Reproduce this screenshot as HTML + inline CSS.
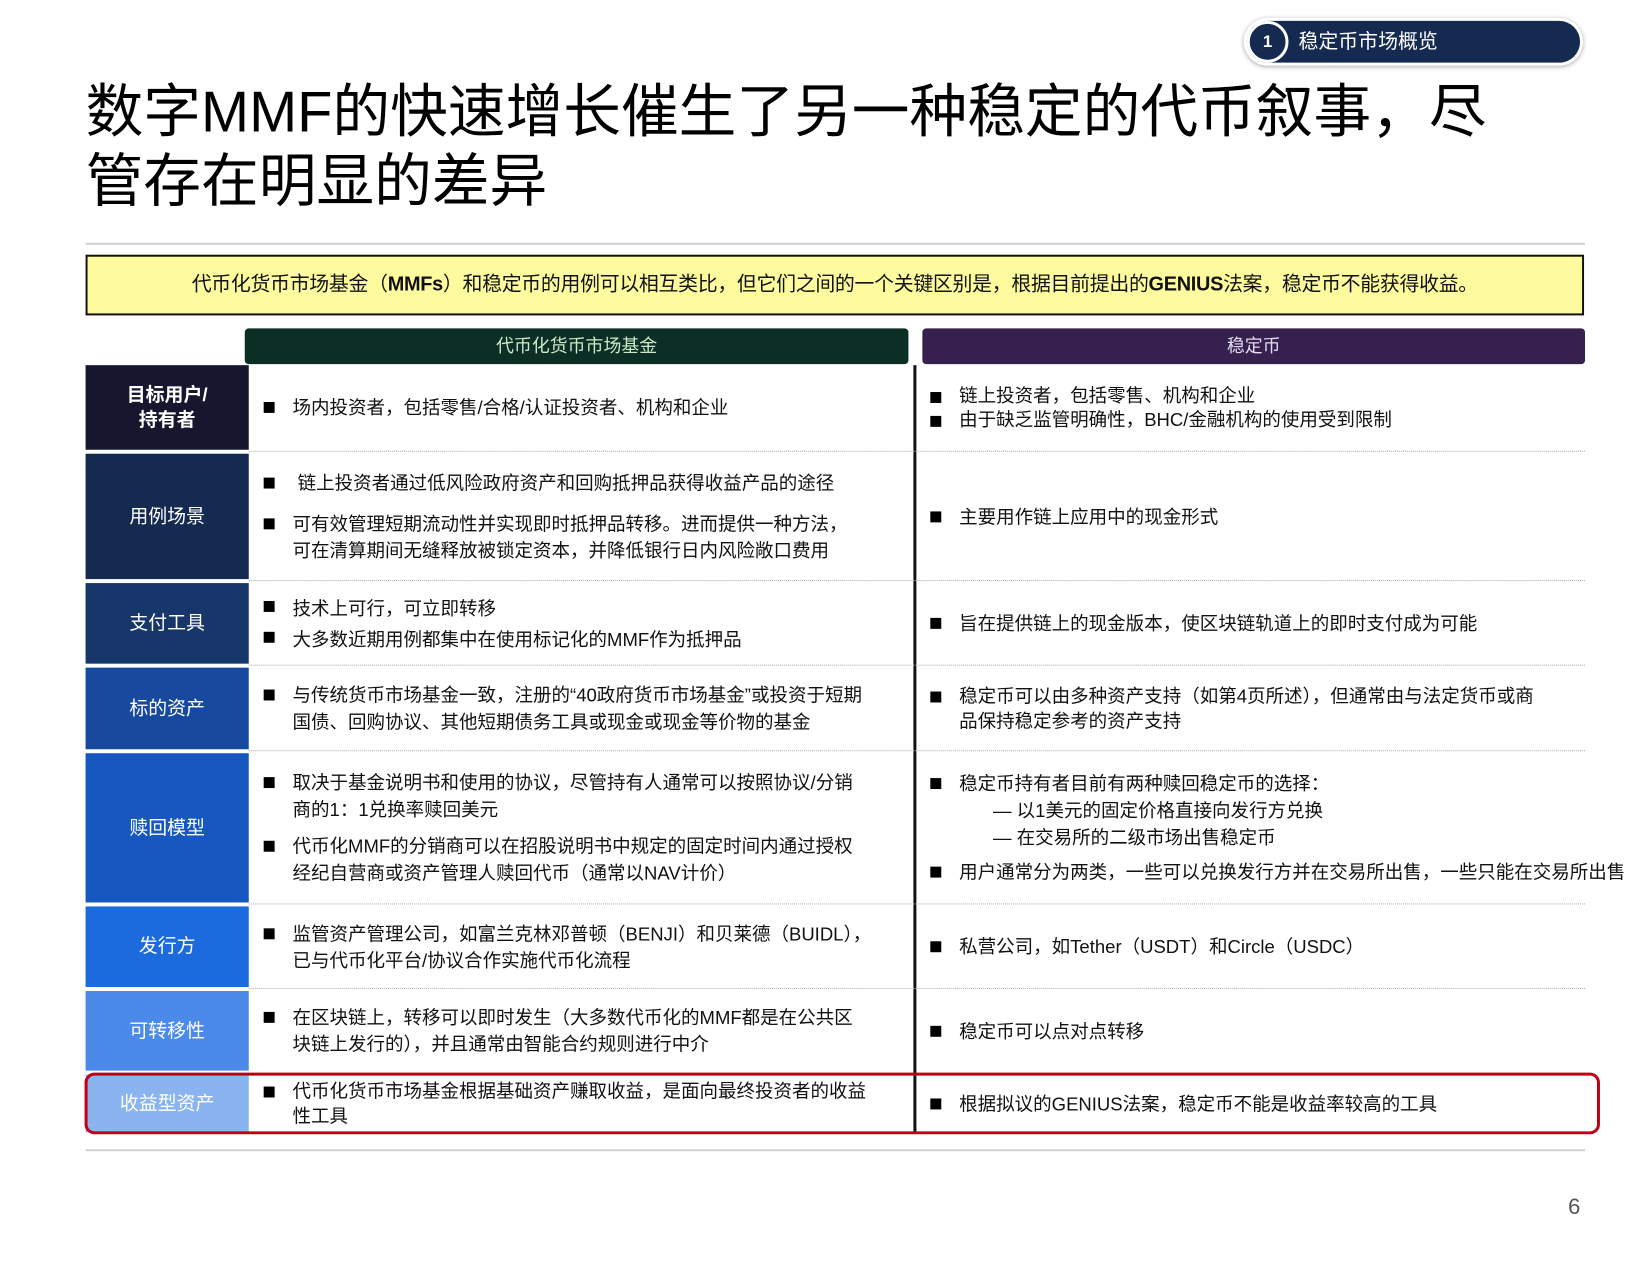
<!DOCTYPE html>
<html><head><meta charset="utf-8"><style>
*{margin:0;padding:0;box-sizing:border-box}
body{width:1650px;height:1275px;background:#fff;position:relative;overflow:hidden;font-family:"Liberation Sans","Noto Sans CJK SC",sans-serif;color:#111}
#w{position:absolute;left:0;top:0;width:1650px;height:1275px;transform:scale(0.995);transform-origin:0 0}
.abs{position:absolute}
.badge{left:1253px;top:21px;width:335px;height:42px;background:#142a50;border-radius:21px;box-shadow:0 0 0 3px #fff,0 1px 5px 3px rgba(0,0,0,.35);color:#fff;font-size:20px;line-height:42px;padding-left:52px}
.badge .num{position:absolute;left:0;top:0;width:42px;height:42px;border-radius:50%;background:#142a50;border:3px solid #fff;text-align:center;line-height:36px;font-size:17px;font-weight:bold}
h1{position:absolute;left:86px;top:78px;font-size:58px;font-weight:normal;line-height:70px;color:#000;white-space:nowrap}
.rule{left:86px;width:1507px;height:2px;background:#d0d0d0}
.yellow{left:86px;top:256px;width:1506px;height:61px;background:#fdfb9e;border:2px solid #111;text-align:center;font-size:20px;line-height:57px;letter-spacing:-0.3px}
.hd{top:330px;height:36px;border-radius:4px;text-align:center;line-height:36px;font-size:18px}
.lab{left:86px;width:164px;color:#fff;font-size:19px;display:flex;align-items:center;justify-content:center;text-align:center;line-height:25px}
.cell{display:flex;flex-direction:column;justify-content:center;font-size:18.6px;line-height:27px}
.l{left:258px;width:655px}
.r{left:928px;width:720px}
.b{position:relative;padding-left:36px;white-space:nowrap}
.b:before{content:"";position:absolute;left:7px;top:8px;width:11px;height:11px;background:#000}
.d{padding-left:70px;white-space:nowrap}
.sep{left:250px;width:1343px;border-top:1px dotted #aaa}
</style></head><body><div id="w">
<div class="abs badge"><div class="num">1</div>稳定币市场概览</div>
<h1>数字MMF的快速增长催生了另一种稳定的代币叙事，尽<br>管存在明显的差异</h1>
<div class="abs rule" style="top:244px"></div>
<div class="abs yellow">代币化货币市场基金（<b>MMFs</b>）和稳定币的用例可以相互类比，但它们之间的一个关键区别是，根据目前提出的<b>GENIUS</b>法案，稳定币不能获得收益。</div>
<div class="abs hd" style="left:246px;width:667px;background:#0b2f25;color:#cfe8c8">代币化货币市场基金</div>
<div class="abs hd" style="left:927px;width:666px;background:#35204e;color:#e4dcf0">稳定币</div>

<div class="abs" style="left:918px;top:367px;width:3px;height:771px;background:#111"></div>

<div class="abs lab" style="top:367px;height:85px;background:#16162e;font-weight:bold">目标用户/<br>持有者</div>
<div class="abs cell l" style="top:367px;height:85px"><div class="b">场内投资者，包括零售/合格/认证投资者、机构和企业</div></div>
<div class="abs cell r" style="top:367px;height:85px;line-height:24px"><div class="b">链上投资者，包括零售、机构和企业</div><div class="b">由于缺乏监管明确性，BHC/金融机构的使用受到限制</div></div>
<div class="abs sep" style="top:453px"></div>

<div class="abs lab" style="top:456px;height:126px;background:#142a50">用例场景</div>
<div class="abs cell l" style="top:456px;height:126px"><div class="b" style="margin-bottom:14px">&nbsp;链上投资者通过低风险政府资产和回购抵押品获得收益产品的途径</div><div class="b">可有效管理短期流动性并实现即时抵押品转移。进而提供一种方法，<br>可在清算期间无缝释放被锁定资本，并降低银行日内风险敞口费用</div></div>
<div class="abs cell r" style="top:456px;height:126px"><div class="b">主要用作链上应用中的现金形式</div></div>
<div class="abs sep" style="top:583px"></div>

<div class="abs lab" style="top:586px;height:81px;background:#17366a">支付工具</div>
<div class="abs cell l" style="top:586px;height:81px;line-height:31px"><div class="b">技术上可行，可立即转移</div><div class="b">大多数近期用例都集中在使用标记化的MMF作为抵押品</div></div>
<div class="abs cell r" style="top:586px;height:81px"><div class="b">旨在提供链上的现金版本，使区块链轨道上的即时支付成为可能</div></div>
<div class="abs sep" style="top:668px"></div>

<div class="abs lab" style="top:671px;height:82px;background:#174a9e">标的资产</div>
<div class="abs cell l" style="top:671px;height:82px"><div class="b">与传统货币市场基金一致，注册的“40政府货币市场基金”或投资于短期<br>国债、回购协议、其他短期债务工具或现金或现金等价物的基金</div></div>
<div class="abs cell r" style="top:671px;height:82px;line-height:25px"><div class="b">稳定币可以由多种资产支持（如第4页所述），但通常由与法定货币或商<br>品保持稳定参考的资产支持</div></div>
<div class="abs sep" style="top:754px"></div>

<div class="abs lab" style="top:757px;height:150px;background:#1758c0">赎回模型</div>
<div class="abs cell l" style="top:757px;height:150px"><div class="b" style="margin-bottom:10px">取决于基金说明书和使用的协议，尽管持有人通常可以按照协议/分销<br>商的1：1兑换率赎回美元</div><div class="b">代币化MMF的分销商可以在招股说明书中规定的固定时间内通过授权<br>经纪自营商或资产管理人赎回代币（通常以NAV计价）</div></div>
<div class="abs cell r" style="top:757px;height:150px"><div class="b">稳定币持有者目前有两种赎回稳定币的选择：</div><div class="d">— 以1美元的固定价格直接向发行方兑换</div><div class="d">— 在交易所的二级市场出售稳定币</div><div class="b" style="margin-top:8px">用户通常分为两类，一些可以兑换发行方并在交易所出售，一些只能在交易所出售</div></div>
<div class="abs sep" style="top:908px"></div>

<div class="abs lab" style="top:911px;height:81px;background:#1b6ade">发行方</div>
<div class="abs cell l" style="top:911px;height:81px"><div class="b">监管资产管理公司，如富兰克林邓普顿（BENJI）和贝莱德（BUIDL），<br>已与代币化平台/协议合作实施代币化流程</div></div>
<div class="abs cell r" style="top:911px;height:81px"><div class="b">私营公司，如Tether（USDT）和Circle（USDC）</div></div>
<div class="abs sep" style="top:993px"></div>

<div class="abs lab" style="top:996px;height:80px;background:#4b8ae8">可转移性</div>
<div class="abs cell l" style="top:996px;height:80px"><div class="b">在区块链上，转移可以即时发生（大多数代币化的MMF都是在公共区<br>块链上发行的），并且通常由智能合约规则进行中介</div></div>
<div class="abs cell r" style="top:996px;height:80px"><div class="b">稳定币可以点对点转移</div></div>

<div class="abs lab" style="top:1080px;height:58px;background:#8ab4f0">收益型资产</div>
<div class="abs cell l" style="top:1080px;height:58px;line-height:25px"><div class="b">代币化货币市场基金根据基础资产赚取收益，是面向最终投资者的收益<br>性工具</div></div>
<div class="abs cell r" style="top:1080px;height:58px"><div class="b">根据拟议的GENIUS法案，稳定币不能是收益率较高的工具</div></div>
<div class="abs" style="left:85px;top:1078px;width:1523px;height:62px;border:3px solid #c00014;border-radius:10px"></div>

<div class="abs rule" style="top:1155px"></div>
<div class="abs" style="left:1576px;top:1200px;font-size:22px;color:#555">6</div>
</div></body></html>
